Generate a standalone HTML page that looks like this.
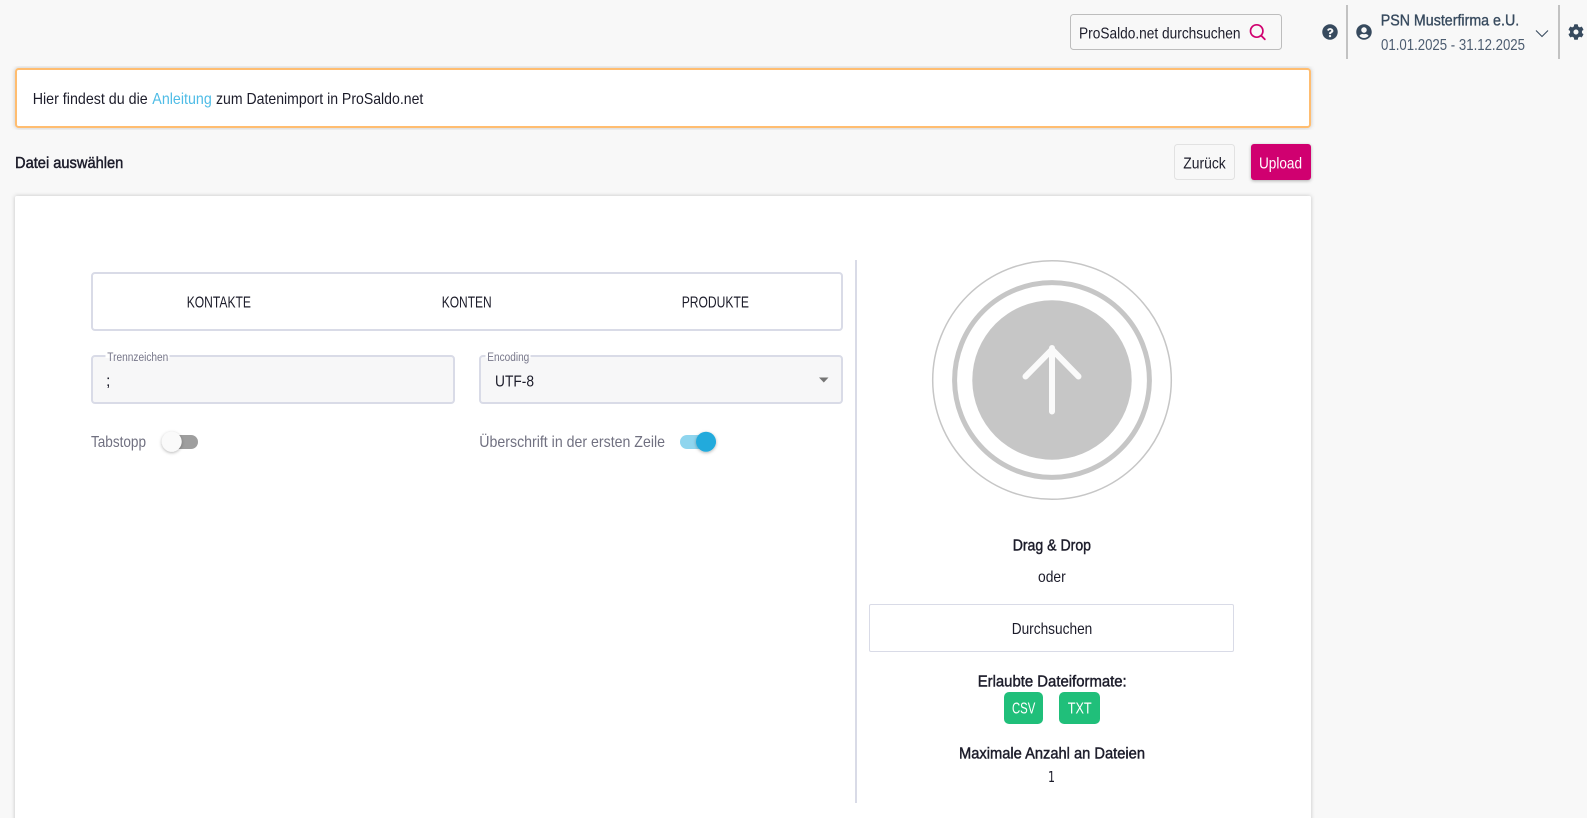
<!DOCTYPE html>
<html lang="de">
<head>
<meta charset="utf-8">
<title>Datei auswählen</title>
<style>
html,body{margin:0;padding:0;width:1587px;height:818px;overflow:hidden;background:#f8f8f8}
svg{position:absolute;left:0;top:0;display:block}
text{font-family:"Liberation Sans",sans-serif;font-size:16px;fill:#1c1c2a}
.m{stroke:#1c1c2a;stroke-width:.45px}
.s{font-size:11.5px;fill:#77778a}
.g{fill:#707080}
.w{fill:#fff}
</style>
</head>
<body>
<svg width="1587" height="818" viewBox="0 0 1587 818" xmlns="http://www.w3.org/2000/svg">
<defs>
<filter id="sh" x="-5%" y="-5%" width="110%" height="110%"><feDropShadow dx="0" dy="0" stdDeviation="2" flood-color="#000" flood-opacity=".22"/></filter>
<filter id="sh2" x="-60%" y="-60%" width="220%" height="220%"><feDropShadow dx="0" dy="1" stdDeviation="1.5" flood-color="#000" flood-opacity=".3"/></filter>
</defs>
<rect width="1587" height="818" fill="#f8f8f8"/>

<!-- search -->
<rect x="1070.5" y="14.5" width="211" height="35" rx="3" fill="#f8f8f8" stroke="#bdbdbd"/>
<text x="1079" y="38.3" textLength="161.5" lengthAdjust="spacingAndGlyphs">ProSaldo.net durchsuchen</text>
<circle cx="1256.7" cy="31" r="6.2" fill="none" stroke="#d0006f" stroke-width="1.7"/>
<path d="M1261.2 35.6l3.6 3.7" stroke="#d0006f" stroke-width="1.8" stroke-linecap="round" fill="none"/>

<!-- header icons -->
<svg x="1322" y="24" width="16" height="16" viewBox="0 0 512 512"><path fill="#374a5e" d="M504 256c0 137-111 248-248 248S8 393 8 256C8 119 119 8 256 8s248 111 248 248zM262.7 130c-44.500 0-72.300 18-94.500 51.800-3.500 5.300-2.400 12.400 2.700 16.300l26.700 20.300c5.200 3.900 12.600 3 16.700-2.100 14.900-18.700 24.100-27.800 46.300-27.800 16.400 0 36.700 10.100 36.700 26.900 0 12-10.400 18.700-26.600 27-19.600 10.200-44.800 23.700-44.800 56.900V310c0 6.600 5.400 12 12 12h46c6.600 0 12-5.400 12-12v-1.300c0-23.600 68.500-24.800 68.500-87.100C364 168.300 309.600 130 262.700 130zM256 346c-21.500 0-38.200 16.700-38.200 38.200 0 21.500 16.700 38.200 38.200 38.200s38.200-16.700 38.200-38.200c0-21.500-16.700-38.200-38.200-38.200z"/></svg>
<rect x="1346" y="5" width="2" height="54" fill="#c2c2c2"/>
<svg x="1356" y="24" width="16" height="16" viewBox="0 0 496 512"><path fill="#374a5e" d="M248 8C111 8 0 119 0 256s111 248 248 248 248-111 248-248S385 8 248 8zm0 96c48.600 0 88 39.400 88 88s-39.400 88-88 88-88-39.400-88-88 39.400-88 88-88zm0 344c-58.700 0-111.300-26.600-146.500-68.200 18.800-35.400 55.600-59.800 98.500-59.800 2.400 0 4.800.4 7.100 1.100 13 4.200 26.600 6.900 40.900 6.900 14.300 0 28-2.700 40.900-6.900 2.300-.7 4.700-1.100 7.100-1.100 42.900 0 79.700 24.400 98.500 59.800C359.300 421.400 306.700 448 248 448z"/></svg>
<text x="1380.7" y="25.7" textLength="138.500" lengthAdjust="spacingAndGlyphs" style="fill:#374a5e;stroke:#374a5e;stroke-width:.35px">PSN Musterfirma e.U.</text>
<text x="1381" y="50" textLength="144" lengthAdjust="spacingAndGlyphs" style="fill:#4c5c70">01.01.2025 - 31.12.2025</text>
<path d="M1536 30.500l6 6 6-6" fill="none" stroke="#374a5e" stroke-width="1.100"/>
<rect x="1558" y="5" width="2" height="54" fill="#c2c2c2"/>
<svg x="1568" y="24" width="16" height="16" viewBox="0 0 512 512"><path fill="#374a5e" d="M487.400 315.700l-42.600-24.600c4.300-23.200 4.300-47 0-70.200l42.600-24.600c4.900-2.800 7.100-8.600 5.500-14-11.100-35.600-30-67.800-54.700-94.600-3.800-4.100-10-5.100-14.800-2.300L380.800 110c-17.900-15.400-38.500-27.300-60.800-35.100V25.800c0-5.600-3.900-10.500-9.400-11.700-36.700-8.200-74.300-7.800-109.200 0-5.500 1.200-9.400 6.100-9.400 11.700V75c-22.200 7.900-42.800 19.800-60.800 35.100L88.700 85.500c-4.900-2.800-11-1.900-14.800 2.300-24.700 26.700-43.600 58.900-54.700 94.600-1.700 5.400.6 11.200 5.500 14L67.300 221c-4.300 23.200-4.300 47 0 70.200l-42.600 24.600c-4.900 2.800-7.100 8.600-5.500 14 11.100 35.600 30 67.800 54.700 94.600 3.800 4.100 10 5.100 14.800 2.300l42.600-24.600c17.900 15.400 38.500 27.300 60.800 35.100v49.200c0 5.600 3.900 10.500 9.400 11.700 36.700 8.200 74.300 7.800 109.200 0 5.500-1.200 9.400-6.100 9.400-11.700v-49.200c22.200-7.900 42.800-19.800 60.800-35.100l42.600 24.600c4.900 2.800 11 1.900 14.800-2.300 24.700-26.700 43.600-58.900 54.700-94.600 1.500-5.500-.7-11.300-5.600-14.100zM256 336c-44.100 0-80-35.900-80-80s35.900-80 80-80 80 35.900 80 80-35.900 80-80 80z"/></svg>

<!-- alert -->
<rect x="16" y="69" width="1294" height="58" rx="2.500" fill="#fff" stroke="#ffbd70" stroke-width="2" filter="url(#sh)"/>
<text x="32.700" y="104" textLength="115" lengthAdjust="spacingAndGlyphs">Hier findest du die</text>
<text x="152.300" y="104" textLength="59.500" lengthAdjust="spacingAndGlyphs" style="fill:#4ebce6">Anleitung</text>
<text x="216" y="104" textLength="207.300" lengthAdjust="spacingAndGlyphs">zum Datenimport in ProSaldo.net</text>

<!-- title row -->
<text class="m" x="15" y="168" textLength="108.300" lengthAdjust="spacingAndGlyphs">Datei auswählen</text>
<rect x="1174.500" y="144.500" width="60" height="35" rx="3" fill="#f8f8f8" stroke="#e2e2e2"/>
<text x="1183.300" y="168.300" textLength="42.400" lengthAdjust="spacingAndGlyphs">Zurück</text>
<rect x="1251" y="144" width="60" height="36" rx="3" fill="#d0006f" filter="url(#sh2)"/>
<text class="w" x="1259" y="168.300" textLength="43" lengthAdjust="spacingAndGlyphs">Upload</text>

<!-- card -->
<rect x="15" y="196" width="1296" height="640" rx="2" fill="#fff" filter="url(#sh)"/>

<!-- tabs -->
<rect x="92" y="273" width="750" height="57" rx="3" fill="#fff" stroke="#d9dbe7" stroke-width="2"/>
<text x="186.700" y="307.300" textLength="64.300" lengthAdjust="spacingAndGlyphs">KONTAKTE</text>
<text x="441.700" y="307.300" textLength="50" lengthAdjust="spacingAndGlyphs">KONTEN</text>
<text x="681.700" y="307.300" textLength="67.300" lengthAdjust="spacingAndGlyphs">PRODUKTE</text>

<!-- fields -->
<rect x="92" y="356" width="362" height="47" rx="3" fill="#f7f7f8" stroke="#d9dbe7" stroke-width="2"/>
<rect x="105.500" y="353" width="64" height="5" fill="#fff"/>
<text class="s" x="107.300" y="361" textLength="61" lengthAdjust="spacingAndGlyphs">Trennzeichen</text>
<text x="106" y="386">;</text>
<rect x="480" y="356" width="362" height="47" rx="3" fill="#f7f7f8" stroke="#d9dbe7" stroke-width="2"/>
<rect x="485.500" y="353" width="45" height="5" fill="#fff"/>
<text class="s" x="487.300" y="361" textLength="42" lengthAdjust="spacingAndGlyphs">Encoding</text>
<text x="495" y="386.300" textLength="39" lengthAdjust="spacingAndGlyphs">UTF-8</text>
<path d="M819 377.500h9.500l-4.700 5z" fill="#757575"/>

<!-- toggles -->
<text class="g" x="91" y="447" textLength="55" lengthAdjust="spacingAndGlyphs">Tabstopp</text>
<rect x="162" y="435" width="36" height="14" rx="7" fill="#9e9e9e"/>
<circle cx="171.700" cy="441.700" r="10" fill="#fafafa" filter="url(#sh2)"/>
<text class="g" x="479.300" y="447" textLength="185.700" lengthAdjust="spacingAndGlyphs">Überschrift in der ersten Zeile</text>
<rect x="680" y="435" width="36" height="14" rx="7" fill="#8fd5ee"/>
<circle cx="706" cy="441.700" r="10" fill="#21aadc" filter="url(#sh2)"/>

<!-- divider -->
<rect x="855" y="260" width="2" height="543" fill="#d9dbe7"/>

<!-- upload circles -->
<circle cx="1052" cy="380" r="119.300" fill="none" stroke="#c6c6c6" stroke-width="1.500"/>
<circle cx="1052" cy="380" r="97.400" fill="none" stroke="#c6c6c6" stroke-width="5"/>
<circle cx="1052" cy="380" r="79.700" fill="#c6c6c6"/>
<path d="M1052 411.500V348M1025.500 376.500L1052 349.500L1078.500 376.500" fill="none" stroke="#fafafa" stroke-width="6" stroke-linecap="round" stroke-linejoin="round"/>

<!-- right side text -->
<text class="m" x="1012.700" y="550.500" textLength="78.300" lengthAdjust="spacingAndGlyphs">Drag &amp; Drop</text>
<text x="1038" y="582" textLength="27.700" lengthAdjust="spacingAndGlyphs">oder</text>
<rect x="869.500" y="604.500" width="364" height="47" rx="1.500" fill="#fff" stroke="#d9dbe7"/>
<text x="1011.700" y="634" textLength="80.600" lengthAdjust="spacingAndGlyphs">Durchsuchen</text>
<text class="m" x="977.700" y="686.500" textLength="149" lengthAdjust="spacingAndGlyphs">Erlaubte Dateiformate:</text>
<rect x="1004" y="692" width="39" height="32" rx="5" fill="#20bf7a"/>
<text class="w" x="1012" y="713.500" textLength="23.300" lengthAdjust="spacingAndGlyphs">CSV</text>
<rect x="1059" y="692" width="41" height="32" rx="5" fill="#20bf7a"/>
<text class="w" x="1067.700" y="713.500" textLength="24" lengthAdjust="spacingAndGlyphs">TXT</text>
<text class="m" x="959" y="758.500" textLength="186" lengthAdjust="spacingAndGlyphs">Maximale Anzahl an Dateien</text>
<text x="1048" y="782" style="font-family:'DejaVu Sans',sans-serif;font-size:15px" textLength="7" lengthAdjust="spacingAndGlyphs">1</text>
</svg>
</body>
</html>
